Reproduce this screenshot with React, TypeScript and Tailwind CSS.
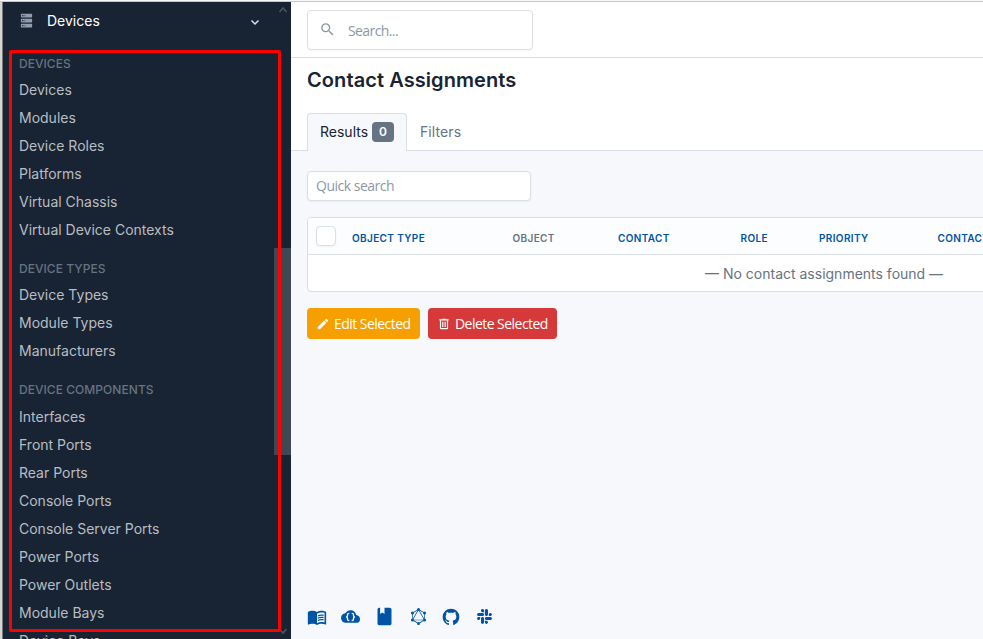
import type { ReactNode } from "react";
import { MdMenuBook } from "react-icons/md";
import { SiGraphql } from "react-icons/si";
import { FaSlack } from "react-icons/fa";

const PATHS = {
  server:
    "M4,1H20A1,1 0 0,1 21,2V6A1,1 0 0,1 20,7H4A1,1 0 0,1 3,6V2A1,1 0 0,1 4,1M4,9H20A1,1 0 0,1 21,10V14A1,1 0 0,1 20,15H4A1,1 0 0,1 3,14V10A1,1 0 0,1 4,9M4,17H20A1,1 0 0,1 21,18V22A1,1 0 0,1 20,23H4A1,1 0 0,1 3,22V18A1,1 0 0,1 4,17M9,5H10V3H9V5M9,13H10V11H9V13M9,21H10V19H9V21M5,3V5H7V3H5M5,11V13H7V11H5M5,19V21H7V19H5Z",
  magnify:
    "M9.5,3A6.5,6.5 0 0,1 16,9.5C16,11.11 15.41,12.59 14.44,13.73L14.71,14H15.5L20.5,19L19,20.5L14,15.5V14.71L13.73,14.44C12.59,15.41 11.11,16 9.5,16A6.5,6.5 0 0,1 3,9.5A6.5,6.5 0 0,1 9.5,3M9.5,5C7,5 5,7 5,9.5C5,12 7,14 9.5,14C12,14 14,12 14,9.5C14,7 12,5 9.5,5Z",
  pencil:
    "M20.71,7.04C21.1,6.65 21.1,6 20.71,5.63L18.37,3.29C18,2.9 17.35,2.9 16.96,3.29L15.12,5.12L18.87,8.87M3,17.25V21H6.75L17.81,9.93L14.06,6.18L3,17.25Z",
  trash:
    "M9,3V4H4V6H5V19A2,2 0 0,0 7,21H17A2,2 0 0,0 19,19V6H20V4H15V3H9M7,6H17V19H7V6M9,8V17H11V8H9M13,8V17H15V8H13Z",
  book: "M18,22A2,2 0 0,0 20,20V4C20,2.89 19.1,2 18,2H12V9L9.5,7.5L7,9V2H6A2,2 0 0,0 4,4V20A2,2 0 0,0 6,22H18Z",
  github:
    "M12,2A10,10 0 0,0 2,12C2,16.42 4.87,20.17 8.84,21.5C9.34,21.58 9.5,21.27 9.5,21C9.5,20.77 9.5,20.14 9.5,19.31C6.73,19.91 6.14,17.97 6.14,17.97C5.68,16.81 5.03,16.5 5.03,16.5C4.12,15.88 5.1,15.9 5.1,15.9C6.1,15.97 6.63,16.93 6.63,16.93C7.5,18.45 8.97,18 9.54,17.76C9.63,17.11 9.89,16.67 10.17,16.42C7.95,16.17 5.62,15.31 5.62,11.5C5.62,10.39 6,9.5 6.65,8.79C6.55,8.54 6.2,7.5 6.75,6.15C6.75,6.15 7.59,5.88 9.5,7.17C10.29,6.95 11.15,6.84 12,6.84C12.85,6.84 13.71,6.95 14.5,7.17C16.41,5.88 17.25,6.15 17.25,6.15C17.8,7.5 17.45,8.54 17.35,8.79C18,9.5 18.38,10.39 18.38,11.5C18.38,15.32 16.04,16.16 13.81,16.41C14.17,16.72 14.5,17.33 14.5,18.26C14.5,19.6 14.5,20.68 14.5,21C14.5,21.27 14.66,21.59 15.17,21.5C19.14,20.16 22,16.42 22,12A10,10 0 0,0 12,2Z",
  cloud:
    "M19.35,10.03C18.67,6.59 15.64,4 12,4C9.11,4 6.6,5.64 5.35,8.03C2.34,8.36 0,10.9 0,14A6,6 0 0,0 6,20H19A5,5 0 0,0 24,15C24,12.36 21.95,10.22 19.35,10.03Z",
};

function Icon({ path, className }: { path: string; className: string }) {
  return (
    <svg viewBox="0 0 24 24" fill="currentColor" className={className}>
      <path d={path} />
    </svg>
  );
}

function Chevron({ d, className }: { d: string; className: string }) {
  return (
    <svg viewBox="0 0 10 10" fill="none" stroke="currentColor" strokeWidth="1.5" className={className}>
      <path d={d} />
    </svg>
  );
}

const groups = [
  {
    title: "Devices",
    items: ["Devices", "Modules", "Device Roles", "Platforms", "Virtual Chassis", "Virtual Device Contexts"],
  },
  { title: "Device Types", items: ["Device Types", "Module Types", "Manufacturers"] },
  {
    title: "Device Components",
    items: [
      "Interfaces",
      "Front Ports",
      "Rear Ports",
      "Console Ports",
      "Console Server Ports",
      "Power Ports",
      "Power Outlets",
      "Module Bays",
      "Device Bays",
    ],
  },
];

function Sidebar() {
  return (
    <aside className="relative h-[637px] w-[288px] shrink-0 overflow-hidden bg-[#182433]">
      <div className="flex h-[37px] items-center pl-[16px] pr-[31px] text-white">
        <Icon path={PATHS.server} className="size-[15px] text-[#929dab]" />
        <span className="ml-[13px] pt-px text-[14px] leading-5">Devices</span>
        <Chevron d="M1.5 3.5 5 7 8.5 3.5" className="ml-auto mt-[2px] size-[10px] text-[#dce1e7]" />
      </div>
      <nav className="pl-[16px]">
        {groups.map((group, index) => (
          <section key={group.title}>
            <h3
              className={`flex items-end text-[12px] font-medium uppercase leading-4 tracking-[0.05px] text-[#667382] ${
                index === 2 ? "h-[38px] pb-[5px]" : "h-[37px] pb-[4px]"
              }`}
            >
              {group.title}
            </h3>
            {group.items.map((item) => (
              <a key={item} className="flex h-[28px] items-center text-[14px] leading-5 text-[#b9bdc2]">
                {item}
              </a>
            ))}
          </section>
        ))}
      </nav>
      <div className="absolute right-0 top-[246px] h-[207px] w-[17px] bg-[#404953]" />
      <Chevron d="M1.5 7 5 3 8.5 7" className="absolute right-[3px] top-[3px] size-[10px] text-[#4b5560]" />
      <Chevron d="M1.5 3 5 7 8.5 3" className="absolute right-[3px] top-[624px] size-[10px] text-[#4b5560]" />
      <div className="absolute left-[6px] top-[48px] h-[582px] w-[272px] rounded-[2px] border-3 border-[#ff0000]" />
    </aside>
  );
}

function Th({ children, className }: { children: ReactNode; className: string }) {
  return <span className={`shrink-0 whitespace-nowrap ${className}`}>{children}</span>;
}

function Results() {
  return (
    <div className="w-[1040px] overflow-hidden rounded-[4px] border border-[#dadfe5] bg-white">
      <div className="flex h-[37px] items-center border-b border-[#dadfe5] bg-[#fcfdfe] pl-[8px] pt-[4px] text-[10px] font-semibold uppercase leading-4 tracking-[0.37px] text-[#0054a6]">
        <span className="-mt-[4px] size-[20px] shrink-0 rounded-[4px] border border-[#dadfe5] bg-white shadow-xs" />
        <Th className="ml-[16px] w-[160.5px]">Object Type</Th>
        <Th className="w-[105.5px] text-[#667382]">Object</Th>
        <Th className="w-[122.5px]">Contact</Th>
        <Th className="w-[78.5px]">Role</Th>
        <Th className="w-[118.5px]">Priority</Th>
        <Th className="w-[100px]">Contact Role</Th>
      </div>
      <div className="flex h-[36px] items-center pl-[397px] pt-[2px] text-[14px] leading-5 text-[#667382]">
        <span className="whitespace-nowrap">— No contact assignments found —</span>
      </div>
    </div>
  );
}

export default function App() {
  return (
    <div className="h-[639px] w-[983px] overflow-hidden bg-white font-['Inter',sans-serif]">
      <div className="h-[2px] border-b border-[#c9c9cc] bg-[#f7f7f8]" />
      <div className="flex">
        <div className="h-[637px] w-[3px] shrink-0 border-r border-[#77797c] bg-[#d8d6d2]" />
        <Sidebar />
        <main className="flex h-[637px] w-[692px] shrink-0 flex-col overflow-hidden bg-[#f6f8fb]">
          <header className="h-[56px] shrink-0 border-b border-[#dadfe5] bg-white pl-[16px] pt-[8px]">
            <div className="flex h-[40px] w-[226px] items-center rounded-[4px] border border-[#dadfe5] pl-[11px] shadow-xs">
              <Icon path={PATHS.magnify} className="-mt-[2px] size-[17px] text-[#8d98a7]" />
              <span className="ml-[12px] pt-[2px] font-['Open_Sans',sans-serif] text-[14px] leading-5 tracking-[-0.6px] text-[#8d98a7]">
                Search...
              </span>
            </div>
          </header>
          <div className="h-[93px] shrink-0 border-b border-[#dadfe5] bg-white pl-[16px] pt-[8px]">
            <h1 className="text-[20px] font-semibold leading-7 tracking-[0.08px] text-[#182433]">
              Contact Assignments
            </h1>
            <div className="mt-[19px] flex h-[38px] items-center text-[14px] leading-5">
              <div className="flex h-[38px] w-[100px] items-center rounded-t-[4px] border border-b-0 border-[#dadfe5] bg-[#f6f8fb] pb-px pl-[12px] text-[#182433]">
                Results
                <span className="ml-[4px] flex h-[20px] w-[22px] items-center justify-center rounded-[4px] bg-[#667382] text-[12px] font-semibold text-white">
                  0
                </span>
              </div>
              <span className="ml-[13px] tracking-[0.1px] text-[#667382]">Filters</span>
            </div>
          </div>
          <div className="pl-[16px] pt-[20px]">
            <div className="flex h-[30px] w-[224px] items-center rounded-[4px] border border-[#dadfe5] bg-white pb-px pl-[8px] font-['Open_Sans',sans-serif] text-[14px] tracking-[-0.5px] text-[#8d98a7] shadow-xs">
              Quick search
            </div>
            <div className="mt-[16px]">
              <Results />
            </div>
            <div className="mt-[16px] flex gap-[8px] font-['Open_Sans',sans-serif] text-[14px] leading-5 tracking-[-0.54px] text-white">
              <button className="flex h-[31px] w-[113px] items-center whitespace-nowrap rounded-[4px] bg-[#f59f00] pl-[9px]">
                <Icon path={PATHS.pencil} className="mr-[4px] size-[14px] shrink-0" />
                Edit Selected
              </button>
              <button className="flex h-[31px] w-[129px] items-center whitespace-nowrap rounded-[4px] bg-[#d63939] pl-[9px]">
                <Icon path={PATHS.trash} className="mr-[4px] size-[14px] shrink-0" />
                Delete Selected
              </button>
            </div>
          </div>
          <footer className="mb-[12px] mt-auto flex items-center pl-[16px] text-[#0054a6]">
            <MdMenuBook className="size-[20px]" />
            <svg viewBox="0 0 24 24" className="ml-[14px] size-[19px]">
              <path d={PATHS.cloud} fill="currentColor" />
              <g fill="none" stroke="#f6f8fb" strokeWidth="1.7">
                <path d="M10.5 8H10Q8.2 8 8.2 9.5V11Q8.2 12.5 6.2 12.5Q8.2 12.5 8.2 14V15.5Q8.2 17 10 17H10.5" />
                <path d="M13.5 8H14Q15.8 8 15.8 9.5V11Q15.8 12.5 17.8 12.5Q15.8 12.5 15.8 14V15.5Q15.8 17 14 17H13.5" />
              </g>
            </svg>
            <Icon path={PATHS.book} className="ml-[14px] size-[21px]" />
            <SiGraphql className="ml-[15px] size-[17px]" />
            <Icon path={PATHS.github} className="ml-[14px] size-[20px]" />
            <FaSlack className="ml-[15px] size-[17px]" />
          </footer>
        </main>
      </div>
    </div>
  );
}
